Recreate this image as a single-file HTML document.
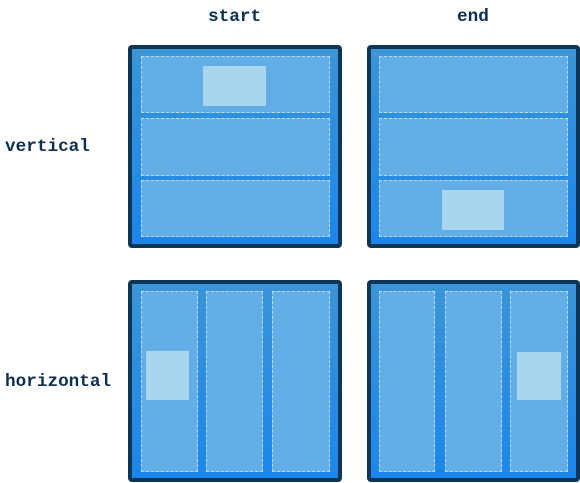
<html><head><style>
body{margin:0;width:580px;height:483px;background:#fff;position:relative;overflow:hidden;font-family:"Liberation Mono",monospace;font-weight:bold;color:#0d3050}
.l{position:absolute;font-size:17.7px;line-height:18px}
.box{position:absolute;box-sizing:border-box;border:4px solid #0d3556;border-radius:4px;background:linear-gradient(#3b95d6,#1b86ec)}
.c{position:absolute;box-sizing:border-box;background:#64aee8;border:1px dashed #b8dcf2}
.h{position:absolute;background:#a9d5ef}
</style></head><body>
<div class="l" style="left:208px;top:8px">start</div>
<div class="l" style="left:457px;top:8px">end</div>
<div class="l" style="left:5px;top:138px">vertical</div>
<div class="l" style="left:5px;top:373px">horizontal</div>

<div class="box" style="left:128px;top:45px;width:214px;height:203px"></div>
<div class="c" style="left:141px;top:56px;width:189px;height:57px"></div>
<div class="c" style="left:141px;top:118px;width:189px;height:58px"></div>
<div class="c" style="left:141px;top:180px;width:189px;height:57px"></div>
<div class="h" style="left:203px;top:66px;width:63px;height:40px"></div>

<div class="box" style="left:367px;top:45px;width:213px;height:203px"></div>
<div class="c" style="left:379px;top:56px;width:189px;height:57px"></div>
<div class="c" style="left:379px;top:118px;width:189px;height:58px"></div>
<div class="c" style="left:379px;top:180px;width:189px;height:57px"></div>
<div class="h" style="left:442px;top:190px;width:62px;height:40px"></div>

<div class="box" style="left:128px;top:280px;width:214px;height:202px"></div>
<div class="c" style="left:141px;top:291px;width:57px;height:181px"></div>
<div class="c" style="left:206px;top:291px;width:57px;height:181px"></div>
<div class="c" style="left:272px;top:291px;width:58px;height:181px"></div>
<div class="h" style="left:146px;top:351px;width:43px;height:49px"></div>

<div class="box" style="left:367px;top:280px;width:213px;height:202px"></div>
<div class="c" style="left:379px;top:291px;width:56px;height:181px"></div>
<div class="c" style="left:445px;top:291px;width:57px;height:181px"></div>
<div class="c" style="left:510px;top:291px;width:58px;height:181px"></div>
<div class="h" style="left:517px;top:352px;width:44px;height:48px"></div>
</body></html>
